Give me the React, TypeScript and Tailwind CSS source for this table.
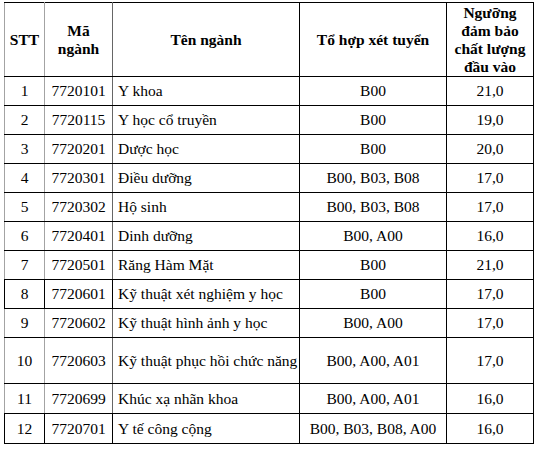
const ROWS = [
  { stt: "1", ma: "7720101", ten: "Y khoa", to: "B00", nguong: "21,0" },
  { stt: "2", ma: "7720115", ten: "Y học cổ truyền", to: "B00", nguong: "19,0" },
  { stt: "3", ma: "7720201", ten: "Dược học", to: "B00", nguong: "20,0" },
  { stt: "4", ma: "7720301", ten: "Điều dưỡng", to: "B00, B03, B08", nguong: "17,0" },
  { stt: "5", ma: "7720302", ten: "Hộ sinh", to: "B00, B03, B08", nguong: "17,0" },
  { stt: "6", ma: "7720401", ten: "Dinh dưỡng", to: "B00, A00", nguong: "16,0" },
  { stt: "7", ma: "7720501", ten: "Răng Hàm Mặt", to: "B00", nguong: "21,0" },
  { stt: "8", ma: "7720601", ten: "Kỹ thuật xét nghiệm y học", to: "B00", nguong: "17,0", dark: true },
  { stt: "9", ma: "7720602", ten: "Kỹ thuật hình ảnh y học", to: "B00, A00", nguong: "17,0" },
  { stt: "10", ma: "7720603", ten: "Kỹ thuật phục hồi chức năng", to: "B00, A00, A01", nguong: "17,0", h: "h-[46px]" },
  { stt: "11", ma: "7720699", ten: "Khúc xạ nhãn khoa", to: "B00, A00, A01", nguong: "16,0", h: "h-[30px]" },
  { stt: "12", ma: "7720701", ten: "Y tế công cộng", to: "B00, B03, B08, A00", nguong: "16,0", dark: true, h: "h-[30px]" },
];

// thin Word-style rules: outer/left column lines render grey in most rows
const cell = "border border-black font-[family-name:'Liberation_Serif',serif]";

export default function App() {
  return (
    <div className="min-h-screen bg-white pl-[4px] pt-[2px] text-black font-serif">
      <table className="w-[529px] table-fixed border-collapse font-serif text-[15.5px] leading-[18px] text-black">
        <colgroup>
          <col className="w-[40px]" />
          <col className="w-[68px]" />
          <col className="w-[187px]" />
          <col className="w-[147px]" />
          <col className="w-[87px]" />
        </colgroup>
        <thead>
          <tr className="h-[74px] font-bold">
            <th className={`${cell} border-l-[#a3a3a3] border-r-[#a3a3a3] text-center`}>STT</th>
            <th className={`${cell} border-r-[#666] text-center`}>
              Mã
              <br />
              ngành
            </th>
            <th className={`${cell} text-center`}>Tên ngành</th>
            <th className={`${cell} text-center`}>Tổ hợp xét tuyển</th>
            <th className={`${cell} text-center`}>
              Ngưỡng
              <br />
              đảm bảo
              <br />
              chất lượng
              <br />
              đầu vào
            </th>
          </tr>
        </thead>
        <tbody>
          {ROWS.map((r) => (
            <tr key={r.stt} className={r.h ?? "h-[29px]"}>
              <td className={r.dark ? `${cell} text-center` : `${cell} border-l-[#a3a3a3] border-r-[#a3a3a3] text-center`}>
                {r.stt}
              </td>
              <td className={r.dark ? `${cell} text-center` : `${cell} border-r-[#666] text-center`}>{r.ma}</td>
              <td className={`${cell} pl-[5px] text-left`}>{r.ten}</td>
              <td className={`${cell} text-center`}>{r.to}</td>
              <td className={`${cell} text-center`}>{r.nguong}</td>
            </tr>
          ))}
        </tbody>
      </table>
    </div>
  );
}
